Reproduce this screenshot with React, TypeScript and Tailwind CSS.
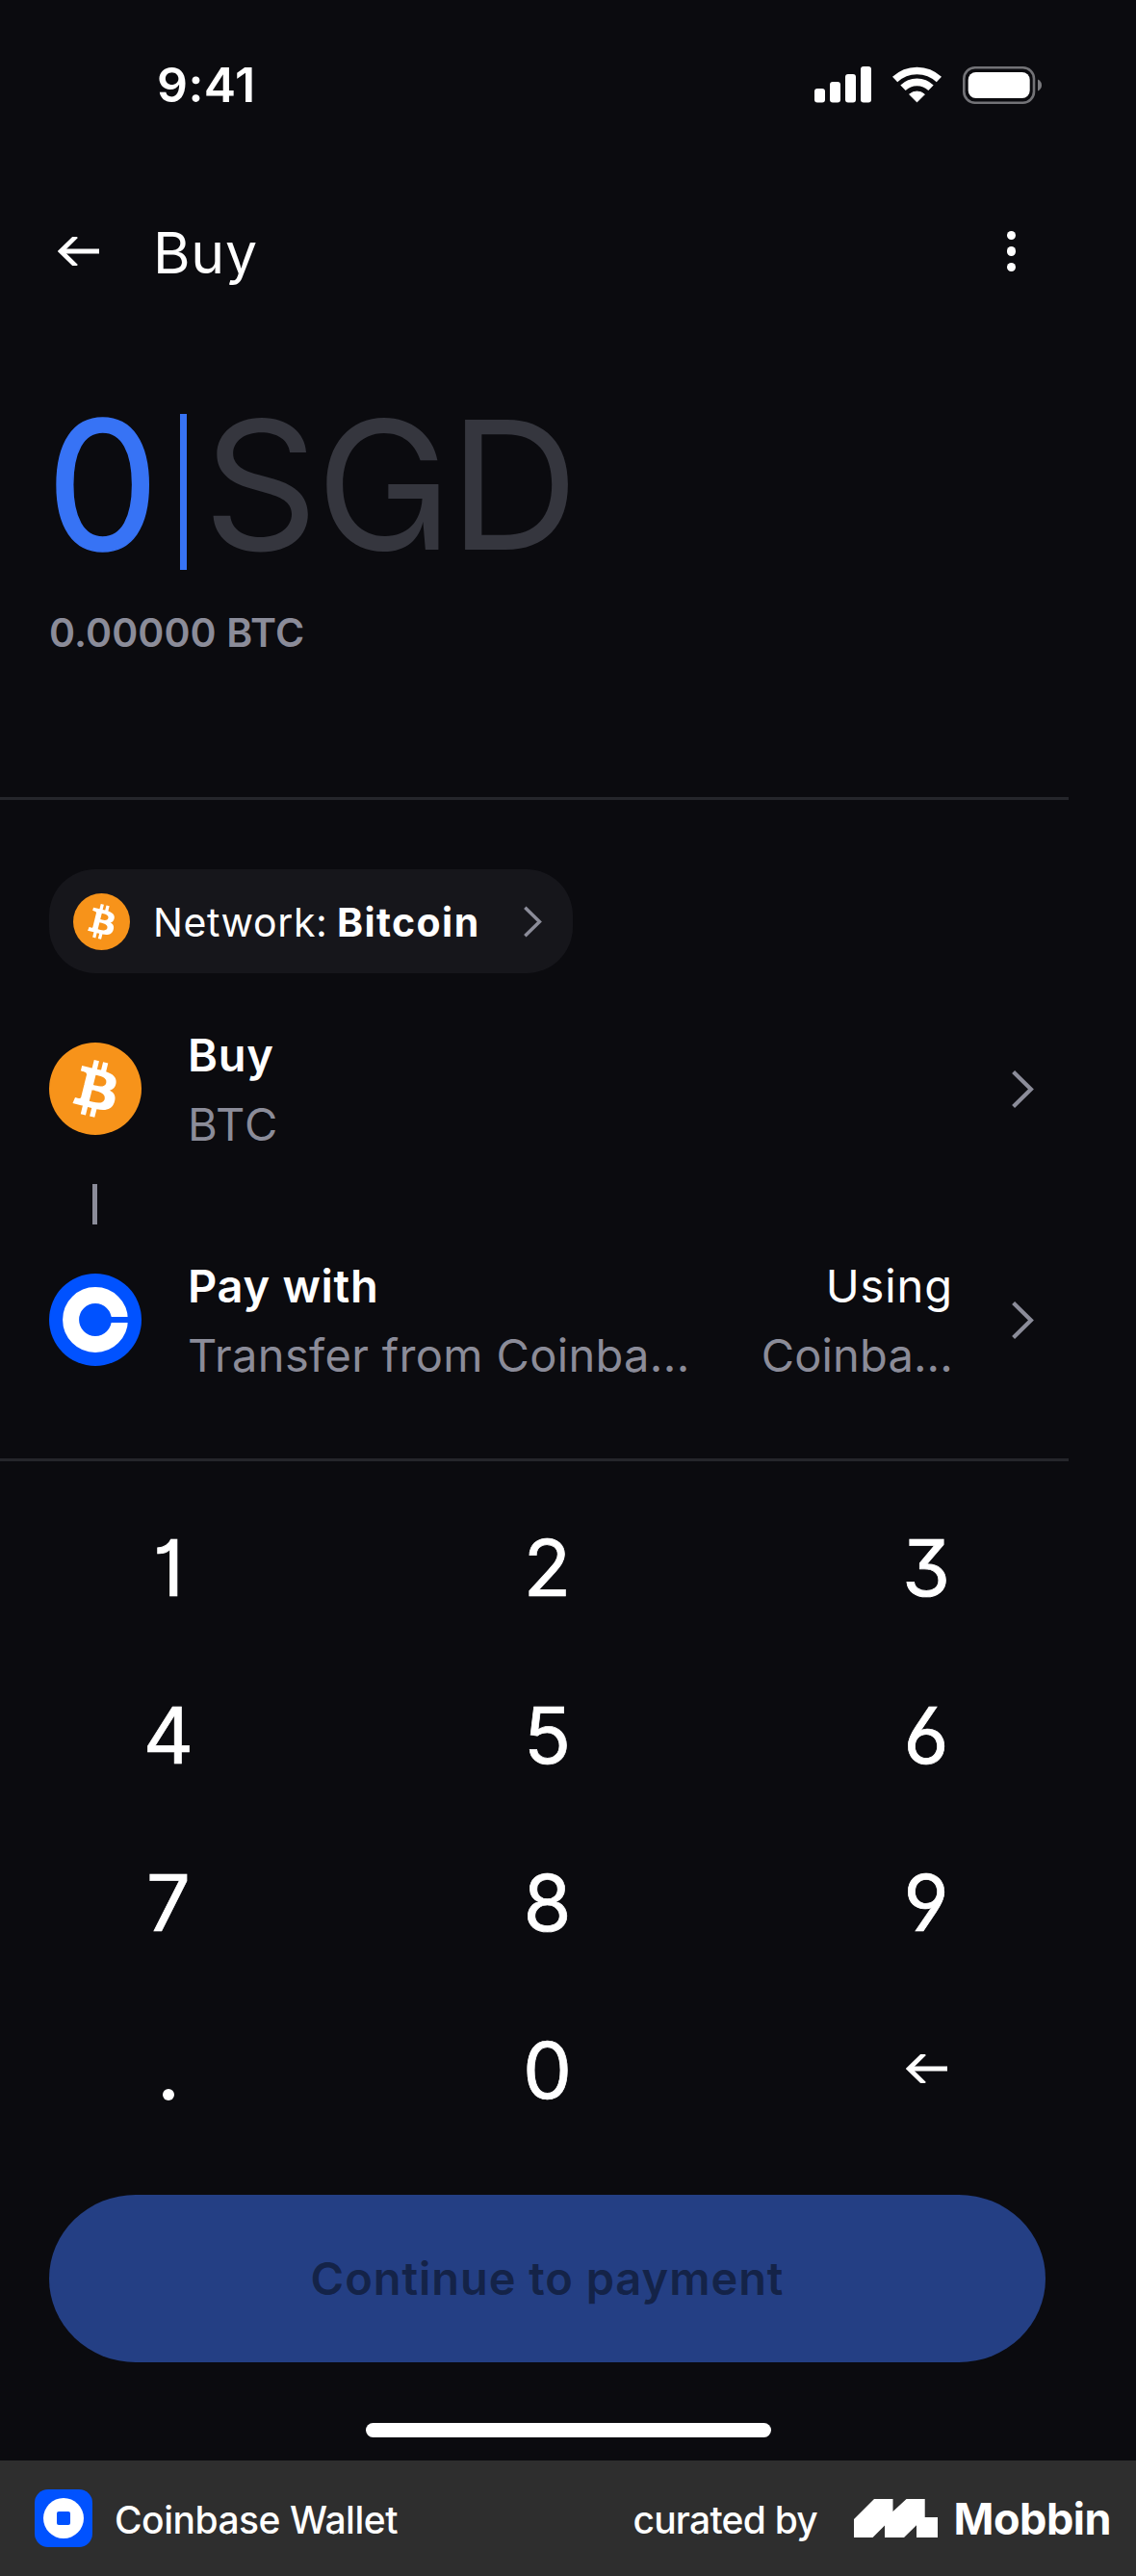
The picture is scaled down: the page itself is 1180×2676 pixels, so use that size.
import type { ReactNode } from "react";

function SignalIcon() {
  return (
    <svg className="h-[38px] w-[59px]" viewBox="0 0 59 38" fill="#fff">
      <rect x="0" y="23" width="11" height="14.5" rx="3" />
      <rect x="16" y="16" width="11" height="21.5" rx="3" />
      <rect x="32" y="8" width="11" height="29.5" rx="3" />
      <rect x="48" y="0" width="11" height="37.5" rx="3" />
    </svg>
  );
}

function WifiIcon() {
  return (
    <svg className="h-[38px] w-[51px]" viewBox="0 0 51 38" fill="none" stroke="#fff" strokeWidth="7.6">
      <path d="M2.6 13.6A33.3 33.3 0 0 1 48.4 13.6" />
      <path d="M11 22.3A20.6 20.6 0 0 1 40 22.3" />
      <path d="M25.5 36.9L17.6 29A12 12 0 0 1 33.4 29Z" fill="#fff" stroke="#fff" strokeWidth="1" strokeLinejoin="round" />
    </svg>
  );
}

function BatteryIcon() {
  return (
    <svg className="h-[39px] w-[82px]" viewBox="0 0 82 39" fill="none">
      <rect x="1.3" y="1.3" width="72.7" height="36.4" rx="11.5" stroke="#737377" strokeWidth="2.6" />
      <rect x="5.7" y="6" width="64" height="27" rx="8" fill="#fff" />
      <path d="M78 13.5C80.6 14.6 82 16.8 82 19.5S80.6 24.4 78 25.5Z" fill="#7b7b7f" />
    </svg>
  );
}

function ArrowLeftIcon({ className }: { className: string }) {
  return (
    <svg className={className} viewBox="0 0 43 30" preserveAspectRatio="none" fill="none" stroke="#fff" strokeWidth="4.8">
      <path d="M3 15H43" />
      <path d="M19.2 -0.6L3.2 15L19.2 30.6" />
    </svg>
  );
}

function ChevronRightIcon({ className }: { className: string }) {
  return (
    <svg className={className} viewBox="0 0 23 39" fill="none" stroke="#8b8c99" strokeWidth="4.2">
      <path d="M1.6 1.6L19.9 19.5L1.6 37.4" />
    </svg>
  );
}

function BitcoinLogo({ className }: { className: string }) {
  return (
    <svg className={className} viewBox="0 0 32 32">
      <circle cx="16" cy="16" r="16" fill="#f7931a" />
      <path
        fill="#fff"
        d="M23.189 14.02c.314-2.096-1.283-3.223-3.465-3.975l.708-2.84-1.728-.43-.69 2.765c-.454-.114-.92-.22-1.385-.326l.695-2.783L15.596 6l-.708 2.839c-.376-.086-.746-.17-1.104-.26l.002-.009-2.384-.595-.46 1.846s1.283.294 1.256.312c.7.175.826.638.805 1.006l-.806 3.235c.048.012.11.03.18.057l-.183-.045-1.13 4.532c-.086.212-.303.531-.793.41.018.025-1.256-.313-1.256-.313l-.858 1.978 2.25.561c.418.105.828.215 1.231.318l-.715 2.872 1.727.43.708-2.84c.472.127.93.245 1.378.357l-.706 2.828 1.728.43.715-2.866c2.948.558 5.164.333 6.097-2.333.752-2.146-.037-3.385-1.588-4.192 1.13-.26 1.98-1.003 2.207-2.538zm-3.95 5.538c-.533 2.147-4.148.986-5.32.695l.95-3.805c1.172.293 4.929.872 4.37 3.11zm.535-5.569c-.487 1.953-3.495.96-4.47.717l.86-3.45c.975.243 4.118.696 3.61 2.733z"
      />
    </svg>
  );
}

function CoinbaseLogo() {
  return (
    <svg className="size-24" viewBox="0 0 96 96">
      <circle cx="48" cy="48" r="48" fill="#0052ff" />
      <circle cx="48" cy="48" r="25.4" fill="none" stroke="#fff" strokeWidth="17" />
      <rect x="62" y="45" width="21" height="6" fill="#0052ff" />
    </svg>
  );
}

function WalletLogo() {
  return (
    <div className="flex size-[60px] items-center justify-center rounded-[14px] bg-[#0052ff]">
      <div className="flex size-[42px] items-center justify-center rounded-full bg-white">
        <div className="size-[14px] rounded-[2px] bg-[#0052ff]" />
      </div>
    </div>
  );
}

function MobbinLogo() {
  return (
    <svg className="h-10 w-[87px]" viewBox="0 0 87 40" fill="#fff">
      <path d="M0 21L21 0H40.5V13L54.5 0H73.7V19H87V40H65V27.3L52 40H32V27.5L19.5 40H0Z" />
    </svg>
  );
}

function StatusBar() {
  return (
    <div className="flex h-[176px] items-center pr-[98px] pl-[163px]">
      <span className="flex-1 text-[50px] leading-none font-semibold tracking-[0.45px]">9:41</span>
      <div className="flex items-center">
        <SignalIcon />
        <div className="ml-[22px] flex">
          <WifiIcon />
        </div>
        <div className="ml-[22px] flex">
          <BatteryIcon />
        </div>
      </div>
    </div>
  );
}

function Header() {
  return (
    <div className="flex h-[174px] items-center pr-[125px] pl-[60px]">
      <ArrowLeftIcon className="mb-1 h-[30px] w-[43px]" />
      <h1 className="mb-[2px] ml-[56px] flex-1 text-[59px] leading-none font-normal tracking-[0.7px]">Buy</h1>
      <div className="mb-1 flex flex-col gap-[7px]">
        <i className="size-[9.5px] rounded-full bg-white" />
        <i className="size-[9.5px] rounded-full bg-white" />
        <i className="size-[9.5px] rounded-full bg-white" />
      </div>
    </div>
  );
}

function Amount() {
  return (
    <div className="mt-20">
      <div className="flex h-[162px] items-start pl-12 text-[186px] leading-[147px] [font-feature-settings:'cv10']">
        <span className="w-[117px] text-[#3773f5] [-webkit-text-stroke:1.5px_#3773f5]">0</span>
        <i className="mr-[17px] ml-[22px] h-full w-[7px] bg-[#3773f5]" />
        <span className="tracking-[-2.2px] text-[#35363e]">SGD</span>
      </div>
      <div className="mt-10 pl-[51px] text-[41px] leading-[50px] font-semibold tracking-[0.1px] text-[#8b8c99]">
        0.00000 BTC
      </div>
    </div>
  );
}

function Divider() {
  return <div className="h-[3px] w-[1110px] bg-[#25262b]" />;
}

function NetworkPill() {
  return (
    <button className="mt-[72px] ml-[51px] flex h-[108px] w-[544px] items-center rounded-[48px] bg-[#16161b] pl-[25px]">
      <BitcoinLogo className="size-[59px]" />
      <span className="ml-6 flex pt-[2px] text-[41px] leading-none">
        <span className="w-[191px] text-left tracking-[0.6px]">Network:</span>
        <b className="tracking-[1.4px]">Bitcoin</b>
      </span>
      <ChevronRightIcon className="mr-8 ml-auto h-[33px] w-[19px]" />
    </button>
  );
}

function Row({ icon, title, subtitle, right }: { icon: ReactNode; title: ReactNode; subtitle: ReactNode; right?: ReactNode }) {
  return (
    <div className="flex h-[146px] items-center pr-[106px] pl-[51px] text-[47px] leading-[72px]">
      {icon}
      <div className="ml-12 pt-[2px]">
        <div className="font-semibold tracking-[0.7px]">{title}</div>
        <div className="text-[#8b8c99]">{subtitle}</div>
      </div>
      <div className="mr-[61px] ml-auto pt-[2px] text-right">{right}</div>
      <ChevronRightIcon className="h-[39px] w-[23px]" />
    </div>
  );
}

function Key({ children }: { children: ReactNode }) {
  return <button className="flex h-[174px] items-center justify-center">{children}</button>;
}

function Keypad() {
  return (
    <div className="mt-6 mr-[94px] ml-[51px] grid grid-cols-[248px_248px_248px] justify-between text-[81px] leading-none [-webkit-text-stroke:0.7px_#fff] [font-feature-settings:'cv01','cv03','cv04','cv09']">
      {["1", "2", "3", "4", "5", "6", "7", "8", "9"].map((n) => (
        <Key key={n}>{n}</Key>
      ))}
      <Key>
        <span className="mt-[49px] size-3 rounded-full bg-white" />
      </Key>
      <Key>0</Key>
      <Key>
        <ArrowLeftIcon className="mb-[5px] h-[30px] w-[43px]" />
      </Key>
    </div>
  );
}

function Footer() {
  return (
    <div className="mt-6 flex h-[120px] items-center bg-[#2e2e2e] pr-[26px] pl-9 text-[39px] leading-none font-medium">
      <WalletLogo />
      <span className="ml-[23px] pt-[3px] tracking-[-0.5px]">Coinbase Wallet</span>
      <span className="ml-auto pt-[3px] tracking-[-0.75px]">curated by</span>
      <div className="mr-[16.5px] ml-[38px] flex">
        <MobbinLogo />
      </div>
      <span className="text-[45px] font-bold tracking-[-0.5px]">Mobbin</span>
    </div>
  );
}

export default function App() {
  return (
    <div className="h-[2676px] w-[1180px] overflow-hidden bg-[#0b0b0f] font-['Inter',sans-serif] text-white">
      <StatusBar />
      <Header />
      <Amount />
      <div className="mt-[146px]">
        <Divider />
      </div>
      <NetworkPill />
      <div className="mt-[47px]">
        <Row
          icon={<BitcoinLogo className="size-24" />}
          title="Buy"
          subtitle={<span className="tracking-[1px]">BTC</span>}
        />
      </div>
      <div className="my-[26px] ml-[96px] h-[42px] w-[5px] bg-[#8b8c99]" />
      <Row
        icon={<CoinbaseLogo />}
        title="Pay with"
        subtitle={<span className="tracking-[0.35px]">Transfer from Coinba...</span>}
        right={
          <>
            <div className="tracking-[0.9px]">Using</div>
            <div className="tracking-[0.15px] text-[#8b8c99]">Coinba...</div>
          </>
        }
      />
      <div className="mt-[71px]">
        <Divider />
      </div>
      <Keypad />
      <button className="mt-[42px] ml-[51px] flex h-[174px] w-[1035px] items-center justify-center rounded-[90px/87px] bg-[#243f84] pb-[2px] text-[47px] leading-none font-semibold tracking-[0.95px] text-[#142348]">
        Continue to payment
      </button>
      <div className="mt-[63px] ml-[380px] h-[15px] w-[421px] rounded-full bg-white" />
      <Footer />
    </div>
  );
}
